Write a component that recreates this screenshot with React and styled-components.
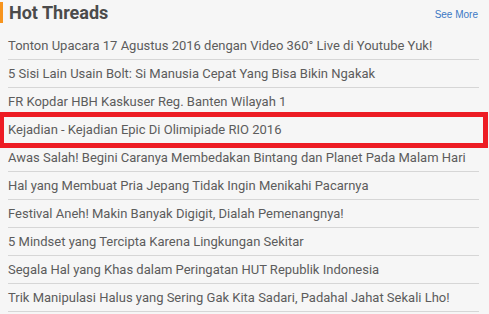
import React from "react";
import styled, { createGlobalStyle } from "styled-components";

const Global = createGlobalStyle`
  html, body { margin: 0; padding: 0; background: #f6f6f6; }
  body { font-family: Roboto, "Liberation Sans", Arial, sans-serif; }
`;

const Panel = styled.section`
  position: relative;
  width: 489px;
  height: 314px;
  overflow: hidden;
  background: #f6f6f6;
`;

const Header = styled.header`
  display: flex;
  align-items: flex-start;
  justify-content: space-between;
  height: 32px;
  padding-right: 11px;
`;

const Title = styled.h2`
  margin: 2px 0 0 0;
  padding-left: 6px;
  border-left: 3px solid #f7941d;
  height: 21px;
  line-height: 21px;
  font-size: 18px;
  font-weight: 700;
  color: #4b4b4b;
`;

const SeeMore = styled.a`
  margin-top: 9px;
  font-size: 10px;
  color: #3b78c4;
  text-decoration: none;
  font-family: "Liberation Sans", Arial, sans-serif;
`;

const List = styled.ul`
  list-style: none;
  margin: 0;
  padding: 0 10px 0 8px;
`;

const Item = styled.li`
  position: relative;
  height: 27px;
  line-height: 27px;
  border-bottom: 1px solid #d6d6d6;
  font-size: 13px;
  color: #5c5c5c;
  white-space: nowrap;

  ${(p) =>
    p.$highlight &&
    `
    &::after {
      content: "";
      position: absolute;
      left: -8px;
      top: -4px;
      width: 488px;
      height: 36px;
      box-sizing: border-box;
      border: 5px solid #ed1c24;
      border-left-width: 4px;
      pointer-events: none;
    }
  `}
`;

const threads = [
  "Tonton Upacara 17 Agustus 2016 dengan Video 360° Live di Youtube Yuk!",
  "5 Sisi Lain Usain Bolt: Si Manusia Cepat Yang Bisa Bikin Ngakak",
  "FR Kopdar HBH Kaskuser Reg. Banten Wilayah 1",
  "Kejadian - Kejadian Epic Di Olimipiade RIO 2016",
  "Awas Salah! Begini Caranya Membedakan Bintang dan Planet Pada Malam Hari",
  "Hal yang Membuat Pria Jepang Tidak Ingin Menikahi Pacarnya",
  "Festival Aneh! Makin Banyak Digigit, Dialah Pemenangnya!",
  "5 Mindset yang Tercipta Karena Lingkungan Sekitar",
  "Segala Hal yang Khas dalam Peringatan HUT Republik Indonesia",
  "Trik Manipulasi Halus yang Sering Gak Kita Sadari, Padahal Jahat Sekali Lho!",
];

export default function App() {
  return (
    <>
      <Global />
      <Panel>
        <Header>
          <Title>Hot Threads</Title>
          <SeeMore href="#">See More</SeeMore>
        </Header>
        <List>
          {threads.map((t, i) => (
            <Item key={i} $highlight={i === 3}>
              {t}
            </Item>
          ))}
        </List>
      </Panel>
    </>
  );
}
